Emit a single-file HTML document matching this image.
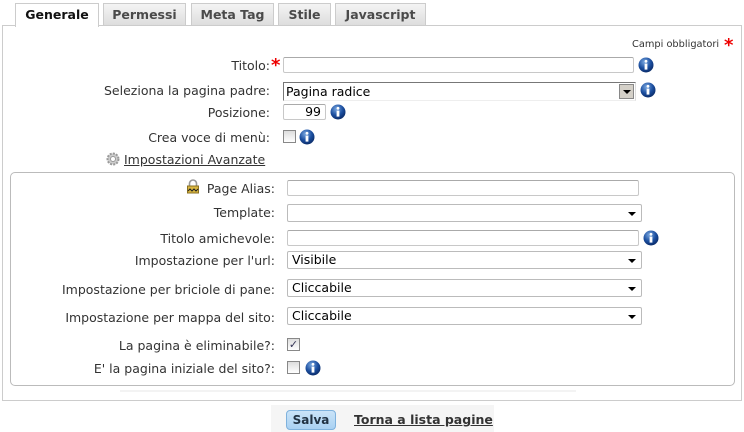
<!DOCTYPE html>
<html><head><meta charset="utf-8">
<style>
*{box-sizing:border-box;margin:0;padding:0}
body{width:744px;height:432px;background:#fff;font-family:"DejaVu Sans","Liberation Sans",sans-serif;font-size:12px;color:#333;position:relative;overflow:hidden}
.a{position:absolute}
.tab{position:absolute;top:3px;height:23px;background:linear-gradient(#f4f4f4,#dcdcdc);border:1px solid #ccc;border-bottom:none;font-weight:bold;font-size:12.5px;color:#4a4a4a;text-align:center;line-height:21px}
.tab.on{background:#fff;color:#111;height:24px;z-index:2}
.lbl{position:absolute;text-align:right;white-space:nowrap;font-size:12.5px}
.inp{position:absolute;height:16px;border:1px solid #c8c8c8;border-top-color:#aaa;background:#fff;border-radius:2px}
.sel{position:absolute;height:18px;border:1px solid #bbb;background:#fff;border-radius:2px;font-size:12.5px;color:#000;padding-left:4px;line-height:16px}
.sel:after{content:"";position:absolute;right:5px;top:7px;border-left:4px solid transparent;border-right:4px solid transparent;border-top:4px solid #000}
.cb{position:absolute;width:13px;height:13px;border:1px solid #888;background:linear-gradient(#ddd,#fff)}
.info{position:absolute;width:16px;height:16px}
</style></head><body>
<svg width="0" height="0" style="position:absolute"><defs>
<radialGradient id="g" cx="40%" cy="30%" r="70%"><stop offset="0" stop-color="#7aa8e0"/><stop offset="0.6" stop-color="#1c4fa0"/><stop offset="1" stop-color="#0b2d6b"/></radialGradient>
<symbol id="i" viewBox="0 0 16 16"><circle cx="8" cy="8" r="7.5" fill="url(#g)"/><circle cx="8" cy="4.3" r="1.4" fill="#fff"/><rect x="6.6" y="6.6" width="2.8" height="6" fill="#fff"/></symbol>
</defs></svg>

<div class="tab on" style="left:15px;width:84px">Generale</div>
<div class="tab" style="left:103px;width:83px">Permessi</div>
<div class="tab" style="left:191px;width:83px">Meta Tag</div>
<div class="tab" style="left:278px;width:53px">Stile</div>
<div class="tab" style="left:335px;width:91px">Javascript</div>

<div class="a" style="left:2px;top:25px;width:740px;height:376px;border:1px solid #ccc"></div>

<div class="a" style="left:632px;top:39px;font-size:9.8px;color:#333;white-space:nowrap">Campi obbligatori</div>
<div class="a" style="left:724px;top:35px;color:#e00;font-size:18px;font-weight:bold">*</div>

<div class="lbl" style="right:474px;top:58px">Titolo:</div>
<div class="a" style="left:271px;top:55px;color:#e00;font-size:18px;font-weight:bold">*</div>
<div class="inp" style="left:283px;top:57px;width:351px"></div>
<svg class="info" style="left:638px;top:57px"><use href="#i"/></svg>

<div class="lbl" style="right:474px;top:83px">Seleziona la pagina padre:</div>
<div class="a" style="left:283px;top:82px;width:353px;height:19px;border:1px solid #777;border-right-color:#ddd;border-bottom-color:#eee;background:#fff;font-size:12.5px;color:#000;padding-left:2px;line-height:17px">Pagina radice
<div class="a" style="right:1px;top:1px;width:15px;height:15px;background:#d4d0c8;border:1px solid #888"><div class="a" style="left:3px;top:5px;border-left:4px solid transparent;border-right:4px solid transparent;border-top:4px solid #000"></div></div></div>
<svg class="info" style="left:640px;top:82px"><use href="#i"/></svg>

<div class="lbl" style="right:474px;top:105px">Posizione:</div>
<div class="inp" style="left:283px;top:104px;width:43px;font-size:12.5px;color:#000;text-align:right;padding-right:4px;line-height:14px">99</div>
<svg class="info" style="left:330px;top:104px"><use href="#i"/></svg>

<div class="lbl" style="right:474px;top:130px">Crea voce di menù:</div>
<div class="cb" style="left:283px;top:130px"></div>
<svg class="info" style="left:299px;top:129px"><use href="#i"/></svg>

<svg class="a" style="left:106px;top:152px" width="14" height="14" viewBox="0 0 14 14"><circle cx="7" cy="7" r="5.5" fill="#ccc" stroke="#999" stroke-dasharray="2 1.2" stroke-width="2"/><circle cx="7" cy="7" r="2.5" fill="#fff" stroke="#999"/></svg>
<div class="a" style="left:124px;top:152px;font-size:12.5px;text-decoration:underline">Impostazioni Avanzate</div>

<div class="a" style="left:10px;top:172px;width:725px;height:214px;border:1px solid #bbb;border-radius:5px"></div>

<svg class="a" style="left:186px;top:179px" width="14" height="15" viewBox="0 0 14 15"><path d="M3.5 7V4.5a3.5 3.5 0 0 1 7 0V7" fill="none" stroke="#999" stroke-width="1.6"/><rect x="1.5" y="7" width="11" height="7" fill="#d9b640" stroke="#8a7020"/><path d="M2 12l2-2 2 2 2-2 2 2 2-2" stroke="#222" fill="none"/></svg>
<div class="lbl" style="right:469px;top:181px">Page Alias:</div>
<div class="inp" style="left:287px;top:180px;width:352px"></div>

<div class="lbl" style="right:469px;top:205px">Template:</div>
<div class="sel" style="left:287px;top:204px;width:355px"></div>

<div class="lbl" style="right:469px;top:231px">Titolo amichevole:</div>
<div class="inp" style="left:287px;top:230px;width:352px"></div>
<svg class="info" style="left:643px;top:230px"><use href="#i"/></svg>

<div class="lbl" style="right:469px;top:253px">Impostazione per l'url:</div>
<div class="sel" style="left:287px;top:251px;width:355px">Visibile</div>

<div class="lbl" style="right:469px;top:282px">Impostazione per briciole di pane:</div>
<div class="sel" style="left:287px;top:279px;width:355px">Cliccabile</div>

<div class="lbl" style="right:469px;top:310px">Impostazione per mappa del sito:</div>
<div class="sel" style="left:287px;top:307px;width:355px">Cliccabile</div>

<div class="lbl" style="right:469px;top:338px">La pagina è eliminabile?:</div>
<div class="cb" style="left:287px;top:338px;font-size:11px;color:#335;line-height:11px;text-align:center">✓</div>

<div class="lbl" style="right:469px;top:361px">E' la pagina iniziale del sito?:</div>
<div class="cb" style="left:287px;top:361px"></div>
<svg class="info" style="left:305px;top:360px"><use href="#i"/></svg>

<div class="a" style="left:120px;top:390px;width:456px;height:2px;background:#f3f3f3"></div>

<div class="a" style="left:271px;top:405px;width:223px;height:27px;background:#f5f5f5"></div>
<div class="a" style="left:286px;top:410px;width:50px;height:20px;border:1px solid #7fb2dd;border-radius:4px;background:linear-gradient(#cbe4f8,#a9d1f2);font-weight:bold;font-size:12px;color:#234;text-align:center;line-height:18px">Salva</div>
<div class="a" style="left:354px;top:412px;font-weight:bold;font-size:12.5px;color:#333;text-decoration:underline">Torna a lista pagine</div>
</body></html>
